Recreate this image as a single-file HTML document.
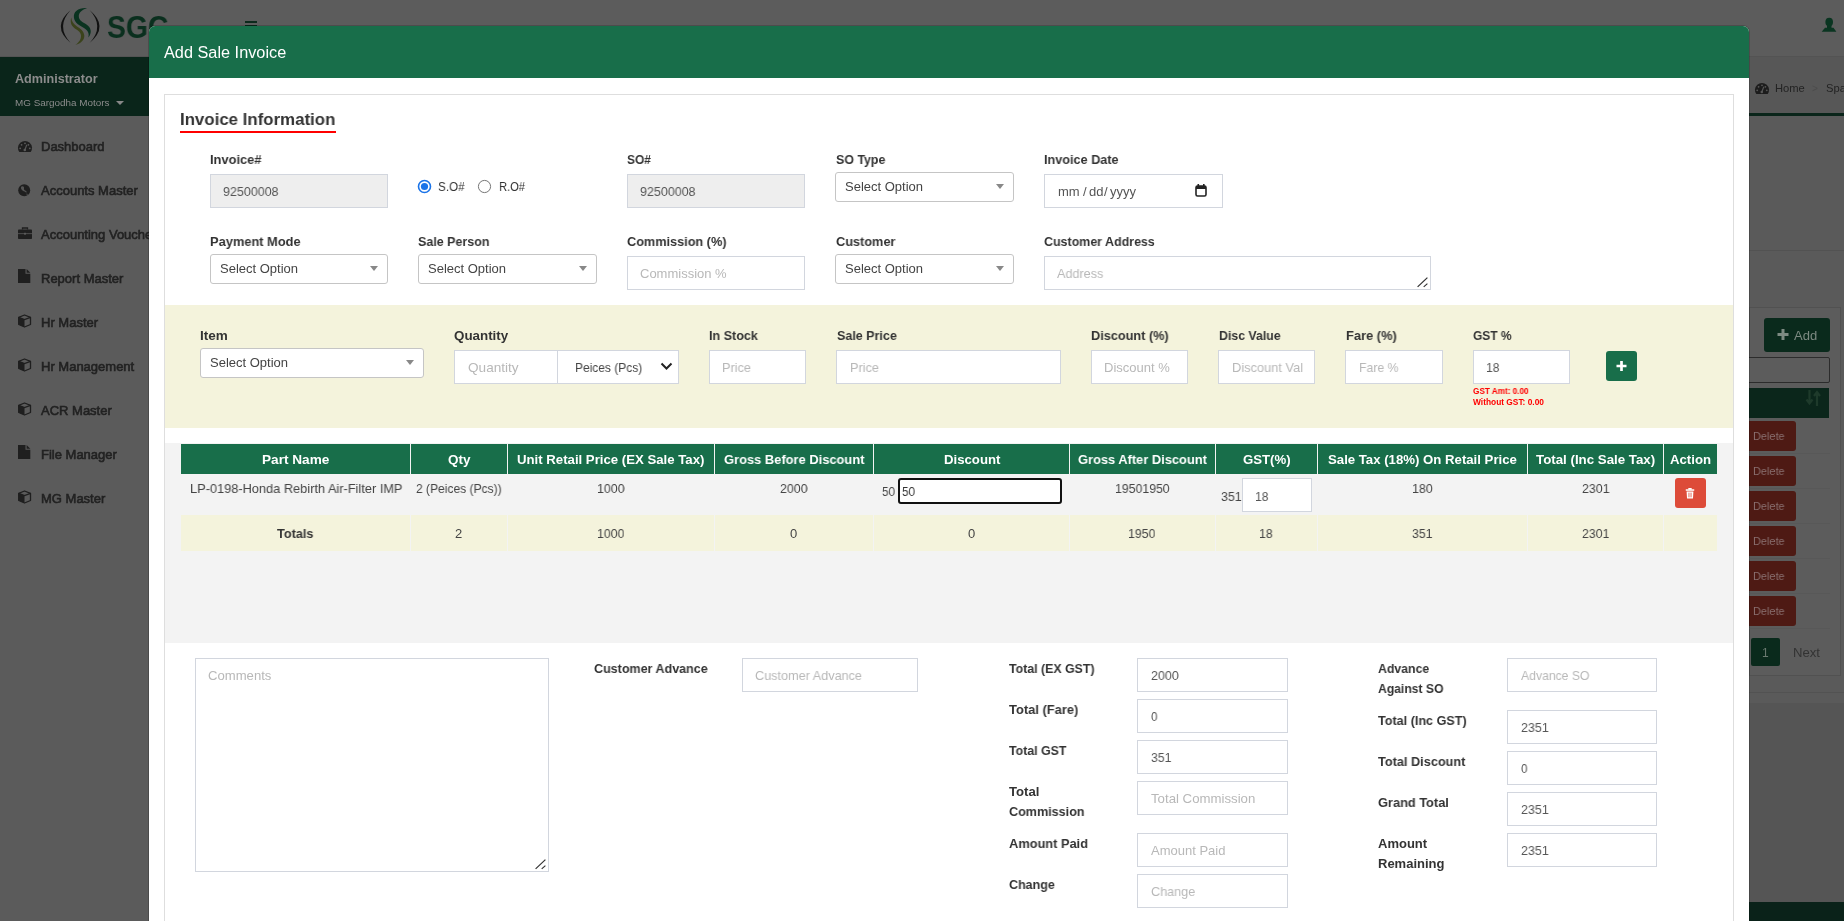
<!DOCTYPE html>
<html><head><meta charset="utf-8">
<style>
*{box-sizing:border-box}
html,body{margin:0;padding:0;width:1844px;height:921px;overflow:hidden;background:#5a5a5a;font-family:"Liberation Sans",sans-serif;color:#333}
.a{position:absolute}
.t{position:absolute;white-space:nowrap;will-change:transform}
svg{position:absolute;overflow:visible}
</style></head><body>

<div class="a" style="left:0px;top:0px;width:1844px;height:56px;background:#5c5c5c;"></div>
<div class="a" style="left:0px;top:56px;width:1844px;height:1px;background:#535353;"></div>
<div class="a" style="left:0px;top:57px;width:230px;height:864px;background:#5b5b5b;"></div>
<div class="a" style="left:0px;top:57px;width:230px;height:59px;background:#0a251a;"></div>
<div class="a" style="left:230px;top:57px;width:1614px;height:56px;background:#575757;"></div>
<div class="a" style="left:230px;top:113px;width:1614px;height:3px;background:#0a251a;"></div>
<div class="a" style="left:230px;top:116px;width:1614px;height:786px;background:#5a5a5a;"></div>
<div class="a" style="left:230px;top:902px;width:1614px;height:19px;background:#0a2219;"></div>
<svg style="left:0px;top:0px" width="180" height="56" viewBox="0 0 180 56">
<path d="M70.5 10.3 Q51 26.5 70.5 42.7 Q55.5 26.5 70.5 10.3 Z" fill="#111"/>
<path d="M89.8 10.3 Q109.3 26.5 89.8 42.7 Q104.8 26.5 89.8 10.3 Z" fill="#111"/>
<path d="M87 8.2 C79 7.5 73 11.5 74 18 C74.8 23 79.5 25.5 84 28 C88 30.5 89.5 33.5 88.3 37.5 C92.5 32.5 91 27.5 86.5 24.5 C82.5 22 79 20.5 78.8 16.5 C78.6 12.5 82 9.5 87 8.2 Z" fill="#0a3320"/>
<path d="M71.3 17.5 C69.5 23 72 27 76.5 29.5 C80.5 32 82 35 80.5 39 C79.5 41.5 77.5 43.5 75.5 44.7 C81 43.5 84.5 40 84.3 35.5 C84 31 80 28.5 77 26.5 C73.5 24 71.5 21.5 71.3 17.5 Z" fill="#3b431b"/>
</svg>
<div class="t" style="left:106.80px;top:6.79px;font-size:31.5px;line-height:41px;font-weight:700;color:#0a2f1e;transform:scaleX(0.8995);transform-origin:0 0;">SGC</div>
<div class="a" style="left:245px;top:21px;width:12px;height:2px;background:#0c2a1c;"></div>
<div class="a" style="left:245px;top:25px;width:12px;height:2px;background:#0c2a1c;"></div>
<svg style="left:1821px;top:17px" width="16" height="15" viewBox="0 0 16 15"><ellipse cx="8.2" cy="5" rx="3.8" ry="4.3" fill="#0a3521"/><rect x="6" y="8" width="4.5" height="3.5" fill="#0a3521"/><path d="M0.7 14.8 L4 10.8 H12.5 L15.4 14.8 Z" fill="#0a3521"/></svg>
<div class="t" style="left:15.00px;top:70.84px;font-size:12.6px;line-height:16px;font-weight:700;color:#8c8c8c;">Administrator</div>
<div class="t" style="left:15.40px;top:96.23px;font-size:9.9px;line-height:13px;font-weight:400;color:#8c8c8c;">MG Sargodha Motors</div>
<div class="a" style="left:116px;top:101px;width:0;height:0;border-left:4px solid transparent;border-right:4px solid transparent;border-top:4px solid #888"></div>
<div class="t" style="left:41.00px;top:138.20px;font-size:13px;line-height:17px;font-weight:400;color:#222;-webkit-text-stroke:0.6px #222;">Dashboard</div>
<svg style="left:18px;top:141px" width="14" height="11" viewBox="0 0 14 11"><path d="M1.3 11 A7 7 0 1 1 12.7 11 Z" fill="#1f1f1f"/><circle cx="7" cy="2.3" r="0.9" fill="#5b5b5b"/><circle cx="3.6" cy="3.8" r="0.9" fill="#5b5b5b"/><circle cx="10.4" cy="3.8" r="0.9" fill="#5b5b5b"/><circle cx="2.2" cy="7.3" r="0.9" fill="#5b5b5b"/><circle cx="11.8" cy="7.3" r="0.9" fill="#5b5b5b"/><path d="M6.8 9 L8.8 3.8" stroke="#5b5b5b" stroke-width="1.1"/><circle cx="6.8" cy="9" r="1.3" fill="#5b5b5b"/></svg>
<div class="t" style="left:41.00px;top:182.20px;font-size:13px;line-height:17px;font-weight:400;color:#222;-webkit-text-stroke:0.6px #222;">Accounts Master</div>
<svg style="left:18px;top:184px" width="13" height="13" viewBox="0 0 13 13"><circle cx="6.2" cy="6.3" r="6" fill="#1f1f1f"/><path d="M3.5 2.5 C5 2 6.5 3 6 4.5 C5.5 6 7.5 6.5 8.5 7.5 C9 8.5 8 9 7.5 8 C6.5 7 5 7.5 4 6 C3 5 2.5 3.5 3.5 2.5 Z" fill="#5b5b5b" opacity="0.9"/><path d="M8 10 C9 9.5 10 10 9.5 11 Z" fill="#5b5b5b"/></svg>
<div class="t" style="left:41.00px;top:226.20px;font-size:13px;line-height:17px;font-weight:400;color:#222;-webkit-text-stroke:0.6px #222;">Accounting Vouchers</div>
<svg style="left:18px;top:227px" width="14" height="12" viewBox="0 0 14 12"><path d="M4.5 2.5 V1 H9.5 V2.5" fill="none" stroke="#1f1f1f" stroke-width="1.3"/><rect x="0" y="2.5" width="14" height="9.5" rx="0.8" fill="#1f1f1f"/><rect x="0" y="6.3" width="14" height="0.8" fill="#5b5b5b"/><rect x="6" y="5.8" width="2" height="1.8" fill="#5b5b5b"/></svg>
<div class="t" style="left:41.00px;top:270.20px;font-size:13px;line-height:17px;font-weight:400;color:#222;-webkit-text-stroke:0.6px #222;">Report Master</div>
<svg style="left:18px;top:269px" width="13" height="14" viewBox="0 0 13 14"><path d="M0 0 H7.5 V4.8 H12.3 V14 H0 Z" fill="#1f1f1f"/><path d="M8.6 0 L12.3 3.7 H8.6 Z" fill="#1f1f1f"/></svg>
<div class="t" style="left:41.00px;top:314.20px;font-size:13px;line-height:17px;font-weight:400;color:#222;-webkit-text-stroke:0.6px #222;">Hr Master</div>
<svg style="left:18px;top:314px" width="14" height="14" viewBox="0 0 14 14"><path d="M6.5 1 L12.5 3.3 V10.5 L6.5 13 L0.7 10.5 V3.3 Z" fill="none" stroke="#1f1f1f" stroke-width="1.3" stroke-linejoin="round"/><path d="M0.7 3.3 L6.5 5.6 L12.5 3.3" fill="none" stroke="#1f1f1f" stroke-width="1.3"/><path d="M0.7 3.3 L6.5 5.6 V13 L0.7 10.5 Z" fill="#1f1f1f"/></svg>
<div class="t" style="left:41.00px;top:358.20px;font-size:13px;line-height:17px;font-weight:400;color:#222;-webkit-text-stroke:0.6px #222;">Hr Management</div>
<svg style="left:18px;top:358px" width="14" height="14" viewBox="0 0 14 14"><path d="M6.5 1 L12.5 3.3 V10.5 L6.5 13 L0.7 10.5 V3.3 Z" fill="none" stroke="#1f1f1f" stroke-width="1.3" stroke-linejoin="round"/><path d="M0.7 3.3 L6.5 5.6 L12.5 3.3" fill="none" stroke="#1f1f1f" stroke-width="1.3"/><path d="M0.7 3.3 L6.5 5.6 V13 L0.7 10.5 Z" fill="#1f1f1f"/></svg>
<div class="t" style="left:41.00px;top:402.20px;font-size:13px;line-height:17px;font-weight:400;color:#222;-webkit-text-stroke:0.6px #222;">ACR Master</div>
<svg style="left:18px;top:402px" width="14" height="14" viewBox="0 0 14 14"><path d="M6.5 1 L12.5 3.3 V10.5 L6.5 13 L0.7 10.5 V3.3 Z" fill="none" stroke="#1f1f1f" stroke-width="1.3" stroke-linejoin="round"/><path d="M0.7 3.3 L6.5 5.6 L12.5 3.3" fill="none" stroke="#1f1f1f" stroke-width="1.3"/><path d="M0.7 3.3 L6.5 5.6 V13 L0.7 10.5 Z" fill="#1f1f1f"/></svg>
<div class="t" style="left:41.00px;top:446.20px;font-size:13px;line-height:17px;font-weight:400;color:#222;-webkit-text-stroke:0.6px #222;">File Manager</div>
<svg style="left:18px;top:445px" width="13" height="14" viewBox="0 0 13 14"><path d="M0 0 H7.5 V4.8 H12.3 V14 H0 Z" fill="#1f1f1f"/><path d="M8.6 0 L12.3 3.7 H8.6 Z" fill="#1f1f1f"/></svg>
<div class="t" style="left:41.00px;top:490.20px;font-size:13px;line-height:17px;font-weight:400;color:#222;-webkit-text-stroke:0.6px #222;">MG Master</div>
<svg style="left:18px;top:490px" width="14" height="14" viewBox="0 0 14 14"><path d="M6.5 1 L12.5 3.3 V10.5 L6.5 13 L0.7 10.5 V3.3 Z" fill="none" stroke="#1f1f1f" stroke-width="1.3" stroke-linejoin="round"/><path d="M0.7 3.3 L6.5 5.6 L12.5 3.3" fill="none" stroke="#1f1f1f" stroke-width="1.3"/><path d="M0.7 3.3 L6.5 5.6 V13 L0.7 10.5 Z" fill="#1f1f1f"/></svg>
<svg style="left:1754.5px;top:82.5px" width="14" height="11" viewBox="0 0 14 11"><path d="M1.3 11 A7 7 0 1 1 12.7 11 Z" fill="#1c1c1c"/><circle cx="7" cy="2.3" r="0.9" fill="#575757"/><circle cx="3.6" cy="3.8" r="0.9" fill="#575757"/><circle cx="10.4" cy="3.8" r="0.9" fill="#575757"/><circle cx="2.2" cy="7.3" r="0.9" fill="#575757"/><circle cx="11.8" cy="7.3" r="0.9" fill="#575757"/><path d="M6.8 9 L8.8 3.8" stroke="#575757" stroke-width="1.1"/><circle cx="6.8" cy="9" r="1.3" fill="#575757"/></svg>
<div class="t" style="left:1774.80px;top:80.80px;font-size:11.2px;line-height:15px;font-weight:400;color:#232323;transform:scaleX(0.9840);transform-origin:0 0;">Home</div>
<div class="t" style="left:1811.90px;top:82.19px;font-size:10px;line-height:13px;font-weight:400;color:#4c4c4c;transform:scaleX(0.9761);transform-origin:0 0;">&gt;</div>
<div class="t" style="left:1825.80px;top:80.80px;font-size:11.2px;line-height:15px;font-weight:400;color:#232323;">Spa</div>
<div class="a" style="left:230px;top:250px;width:1614px;height:1px;background:#525252;"></div>
<div class="a" style="left:1749px;top:307px;width:92px;height:369px;background:#5c5c5c;border:1px solid #515151;"></div>
<div class="a" style="left:1764px;top:318px;width:66px;height:34px;background:#0a2a1c;border-radius:3px;"></div>
<svg style="left:1777px;top:329px" width="12" height="11" viewBox="0 0 12 11"><path d="M6 0 V11 M0.5 5.5 H11.5" stroke="#7d8a82" stroke-width="3"/></svg>
<div class="t" style="left:1794.00px;top:327.20px;font-size:13px;line-height:17px;font-weight:400;color:#7d8a82;transform:scaleX(0.9813);transform-origin:0 0;">Add</div>
<div class="a" style="left:1700px;top:357px;width:130px;height:26px;background:#5c5c5c;border:1px solid #2c2c2c;border-radius:2px;"></div>
<div class="a" style="left:1700px;top:388px;width:129px;height:30px;background:#0b261b;"></div>
<svg style="left:1806px;top:390px" width="15" height="16" viewBox="0 0 15 16"><path d="M3.5 0 V12 M0.5 9.5 L3.5 13.5 L6.5 9.5" stroke="#1e3a2b" stroke-width="2.2" fill="none"/><path d="M11 16 V3 M8 6 L11 2 L14 6" stroke="#1e3a2b" stroke-width="2.2" fill="none"/></svg>
<div class="a" style="left:1700px;top:421px;width:96px;height:30px;background:#4e1a14;border-radius:3px;"></div>
<div class="t" style="left:1753.40px;top:428.70px;font-size:11.5px;line-height:15px;font-weight:400;color:#8a7070;transform:scaleX(0.9506);transform-origin:0 0;">Delete</div>
<div class="a" style="left:1749px;top:453px;width:81px;height:1px;background:#585858;"></div>
<div class="a" style="left:1700px;top:456px;width:96px;height:30px;background:#4e1a14;border-radius:3px;"></div>
<div class="t" style="left:1753.40px;top:463.70px;font-size:11.5px;line-height:15px;font-weight:400;color:#8a7070;transform:scaleX(0.9506);transform-origin:0 0;">Delete</div>
<div class="a" style="left:1749px;top:488px;width:81px;height:1px;background:#585858;"></div>
<div class="a" style="left:1700px;top:491px;width:96px;height:30px;background:#4e1a14;border-radius:3px;"></div>
<div class="t" style="left:1753.40px;top:498.70px;font-size:11.5px;line-height:15px;font-weight:400;color:#8a7070;transform:scaleX(0.9506);transform-origin:0 0;">Delete</div>
<div class="a" style="left:1749px;top:523px;width:81px;height:1px;background:#585858;"></div>
<div class="a" style="left:1700px;top:526px;width:96px;height:30px;background:#4e1a14;border-radius:3px;"></div>
<div class="t" style="left:1753.40px;top:533.70px;font-size:11.5px;line-height:15px;font-weight:400;color:#8a7070;transform:scaleX(0.9506);transform-origin:0 0;">Delete</div>
<div class="a" style="left:1749px;top:558px;width:81px;height:1px;background:#585858;"></div>
<div class="a" style="left:1700px;top:561px;width:96px;height:30px;background:#4e1a14;border-radius:3px;"></div>
<div class="t" style="left:1753.40px;top:568.70px;font-size:11.5px;line-height:15px;font-weight:400;color:#8a7070;transform:scaleX(0.9506);transform-origin:0 0;">Delete</div>
<div class="a" style="left:1749px;top:593px;width:81px;height:1px;background:#585858;"></div>
<div class="a" style="left:1700px;top:596px;width:96px;height:30px;background:#4e1a14;border-radius:3px;"></div>
<div class="t" style="left:1753.40px;top:603.70px;font-size:11.5px;line-height:15px;font-weight:400;color:#8a7070;transform:scaleX(0.9506);transform-origin:0 0;">Delete</div>
<div class="a" style="left:1749px;top:628px;width:81px;height:1px;background:#585858;"></div>
<div class="a" style="left:1751px;top:638px;width:29px;height:28px;background:#0a2a1c;border-radius:2px;"></div>
<div class="t" style="left:1762.00px;top:645.03px;font-size:12px;line-height:16px;font-weight:400;color:#6a7a70;">1</div>
<div class="t" style="left:1793.00px;top:644.20px;font-size:13px;line-height:17px;font-weight:400;color:#333;transform:scaleX(1.0101);transform-origin:0 0;">Next</div>
<div class="a" style="left:1749px;top:692px;width:95px;height:1px;background:#525252;"></div>
<div class="a" style="left:1749px;top:703px;width:95px;height:199px;background:#555555;"></div>
<div class="a" style="left:148px;top:25px;width:1602px;height:935px;background:rgba(0,0,0,0.17);border-radius:7px 7px 0 0;"></div>
<div class="a" style="left:149px;top:26px;width:1600px;height:934px;background:#fff;border-radius:6px 6px 0 0;"></div>
<div class="a" style="left:149px;top:26px;width:1600px;height:52px;background:#186e4a;border-radius:6px 6px 0 0;"></div>
<div class="t" style="left:163.60px;top:42.11px;font-size:16.3px;line-height:21px;font-weight:400;color:#fff;">Add Sale Invoice</div>
<div class="a" style="left:164px;top:94px;width:1570px;height:866px;background:#fff;border:1px solid #dedede;"></div>
<div class="t" style="left:179.90px;top:109.38px;font-size:17px;line-height:22px;font-weight:700;color:#333;transform:scaleX(0.9905);transform-origin:0 0;">Invoice Information</div>
<div class="a" style="left:180px;top:131px;width:156px;height:2px;background:#ff0000;"></div>
<div class="t" style="left:209.70px;top:150.60px;font-size:13px;line-height:17px;font-weight:700;color:#333;transform:scaleX(0.9899);transform-origin:0 0;">Invoice#</div>
<div class="a" style="left:210px;top:174px;width:178px;height:34px;background:#eeeeee;border:1px solid #d2d6de;"></div>
<div class="t" style="left:222.50px;top:183.20px;font-size:13px;line-height:17px;font-weight:400;color:#555;transform:scaleX(0.9595);transform-origin:0 0;">92500008</div>
<svg style="left:417px;top:179px" width="15" height="15" viewBox="0 0 15 15"><circle cx="7.5" cy="7.5" r="6" fill="#fff" stroke="#1a73e8" stroke-width="1.6"/><circle cx="7.5" cy="7.5" r="3.6" fill="#1a73e8"/></svg>
<div class="t" style="left:438.40px;top:177.90px;font-size:13px;line-height:17px;font-weight:400;color:#333;transform:scaleX(0.8979);transform-origin:0 0;">S.O#</div>
<svg style="left:477px;top:179px" width="15" height="15" viewBox="0 0 15 15"><circle cx="7.5" cy="7.5" r="6.1" fill="#fff" stroke="#767676" stroke-width="1"/></svg>
<div class="t" style="left:499.00px;top:177.90px;font-size:13px;line-height:17px;font-weight:400;color:#333;transform:scaleX(0.8569);transform-origin:0 0;">R.O#</div>
<div class="t" style="left:627.00px;top:150.60px;font-size:13px;line-height:17px;font-weight:700;color:#333;transform:scaleX(0.9188);transform-origin:0 0;">SO#</div>
<div class="a" style="left:627px;top:174px;width:178px;height:34px;background:#eeeeee;border:1px solid #d2d6de;"></div>
<div class="t" style="left:639.50px;top:183.20px;font-size:13px;line-height:17px;font-weight:400;color:#555;transform:scaleX(0.9595);transform-origin:0 0;">92500008</div>
<div class="t" style="left:835.70px;top:150.60px;font-size:13px;line-height:17px;font-weight:700;color:#333;transform:scaleX(0.9542);transform-origin:0 0;">SO Type</div>
<div class="a" style="left:835px;top:172px;width:179px;height:30px;background:#fff;border:1px solid #c5c5c5;border-radius:3px;"></div>
<div class="t" style="left:844.50px;top:178.20px;font-size:13px;line-height:17px;font-weight:400;color:#444;">Select Option</div>
<div class="a" style="left:995.5px;top:184px;width:0;height:0;border-left:4px solid transparent;border-right:4px solid transparent;border-top:5px solid #888"></div>
<div class="t" style="left:1044.00px;top:150.60px;font-size:13px;line-height:17px;font-weight:700;color:#333;transform:scaleX(0.9741);transform-origin:0 0;">Invoice Date</div>
<div class="a" style="left:1044px;top:174px;width:179px;height:34px;background:#fff;border:1px solid #d2d6de;"></div>
<div class="t" style="left:1058.30px;top:183.20px;font-size:13px;line-height:17px;font-weight:400;color:#555;">mm</div>
<div class="t" style="left:1082.50px;top:183.20px;font-size:13px;line-height:17px;font-weight:400;color:#555;">/</div>
<div class="t" style="left:1088.60px;top:183.20px;font-size:13px;line-height:17px;font-weight:400;color:#555;">dd</div>
<div class="t" style="left:1104.30px;top:183.20px;font-size:13px;line-height:17px;font-weight:400;color:#555;">/</div>
<div class="t" style="left:1110.40px;top:183.20px;font-size:13px;line-height:17px;font-weight:400;color:#555;">yyyy</div>
<svg style="left:1195px;top:184px" width="12" height="13" viewBox="0 0 12 13"><rect x="1" y="2" width="10" height="10" rx="1.5" fill="none" stroke="#222" stroke-width="1.6"/><rect x="1" y="2" width="10" height="3" fill="#222"/><rect x="2.5" y="0" width="1.6" height="3" fill="#222"/><rect x="8" y="0" width="1.6" height="3" fill="#222"/></svg>
<div class="t" style="left:210.00px;top:232.80px;font-size:13px;line-height:17px;font-weight:700;color:#333;transform:scaleX(0.9875);transform-origin:0 0;">Payment Mode</div>
<div class="a" style="left:210px;top:254px;width:178px;height:30px;background:#fff;border:1px solid #c5c5c5;border-radius:3px;"></div>
<div class="t" style="left:219.50px;top:260.20px;font-size:13px;line-height:17px;font-weight:400;color:#444;">Select Option</div>
<div class="a" style="left:369.5px;top:266px;width:0;height:0;border-left:4px solid transparent;border-right:4px solid transparent;border-top:5px solid #888"></div>
<div class="t" style="left:418.00px;top:232.80px;font-size:13px;line-height:17px;font-weight:700;color:#333;transform:scaleX(0.9607);transform-origin:0 0;">Sale Person</div>
<div class="a" style="left:418px;top:254px;width:179px;height:30px;background:#fff;border:1px solid #c5c5c5;border-radius:3px;"></div>
<div class="t" style="left:427.50px;top:260.20px;font-size:13px;line-height:17px;font-weight:400;color:#444;">Select Option</div>
<div class="a" style="left:578.5px;top:266px;width:0;height:0;border-left:4px solid transparent;border-right:4px solid transparent;border-top:5px solid #888"></div>
<div class="t" style="left:627.00px;top:232.80px;font-size:13px;line-height:17px;font-weight:700;color:#333;transform:scaleX(0.9770);transform-origin:0 0;">Commission (%)</div>
<div class="a" style="left:627px;top:256px;width:178px;height:34px;background:#fff;border:1px solid #d2d6de;"></div>
<div class="t" style="left:640.00px;top:265.20px;font-size:13px;line-height:17px;font-weight:400;color:#b8b8b8;">Commission %</div>
<div class="t" style="left:836.00px;top:232.80px;font-size:13px;line-height:17px;font-weight:700;color:#333;transform:scaleX(0.9789);transform-origin:0 0;">Customer</div>
<div class="a" style="left:835px;top:254px;width:179px;height:30px;background:#fff;border:1px solid #c5c5c5;border-radius:3px;"></div>
<div class="t" style="left:844.50px;top:260.20px;font-size:13px;line-height:17px;font-weight:400;color:#444;">Select Option</div>
<div class="a" style="left:995.5px;top:266px;width:0;height:0;border-left:4px solid transparent;border-right:4px solid transparent;border-top:5px solid #888"></div>
<div class="t" style="left:1044.00px;top:232.80px;font-size:13px;line-height:17px;font-weight:700;color:#333;transform:scaleX(0.9566);transform-origin:0 0;">Customer Address</div>
<div class="a" style="left:1044px;top:256px;width:387px;height:34px;background:#fff;border:1px solid #d2d6de;"></div>
<div class="t" style="left:1057.00px;top:265.20px;font-size:13px;line-height:17px;font-weight:400;color:#b8b8b8;transform:scaleX(0.9687);transform-origin:0 0;">Address</div>
<svg style="left:1416px;top:275px" width="15" height="15" viewBox="0 0 15 15"><path d="M1.6 11.9 L11.4 2.6 M7.7 11.9 L11.4 8.6" stroke="#333" stroke-width="1.2"/></svg>
<div class="a" style="left:165px;top:305px;width:1568px;height:123px;background:#f4f3dc;"></div>
<div class="t" style="left:200.00px;top:326.70px;font-size:13px;line-height:17px;font-weight:700;color:#333;transform:scaleX(1.0400);transform-origin:0 0;">Item</div>
<div class="a" style="left:200px;top:348px;width:224px;height:30px;background:#fff;border:1px solid #c5c5c5;border-radius:3px;"></div>
<div class="t" style="left:209.50px;top:354.20px;font-size:13px;line-height:17px;font-weight:400;color:#444;">Select Option</div>
<div class="a" style="left:405.5px;top:360px;width:0;height:0;border-left:4px solid transparent;border-right:4px solid transparent;border-top:5px solid #888"></div>
<div class="t" style="left:454.00px;top:326.70px;font-size:13px;line-height:17px;font-weight:700;color:#333;transform:scaleX(1.0280);transform-origin:0 0;">Quantity</div>
<div class="a" style="left:454px;top:350px;width:104px;height:34px;background:#fff;border:1px solid #d2d6de;"></div>
<div class="t" style="left:467.50px;top:358.60px;font-size:13px;line-height:17px;font-weight:400;color:#b8b8b8;transform:scaleX(1.0452);transform-origin:0 0;">Quantity</div>
<div class="a" style="left:557px;top:350px;width:122px;height:34px;background:#fff;border:1px solid #d2d6de;"></div>
<div class="t" style="left:575.20px;top:358.60px;font-size:13px;line-height:17px;font-weight:400;color:#444;transform:scaleX(0.9197);transform-origin:0 0;">Peices (Pcs)</div>
<svg style="left:660px;top:362px" width="13" height="9" viewBox="0 0 13 9"><path d="M1.5 1.5 L6.5 6.5 L11.5 1.5" fill="none" stroke="#222" stroke-width="2"/></svg>
<div class="t" style="left:709.00px;top:326.70px;font-size:13px;line-height:17px;font-weight:700;color:#333;transform:scaleX(0.9670);transform-origin:0 0;">In Stock</div>
<div class="a" style="left:709px;top:350px;width:97px;height:34px;background:#fff;border:1px solid #d2d6de;"></div>
<div class="t" style="left:722.20px;top:358.60px;font-size:13px;line-height:17px;font-weight:400;color:#b8b8b8;transform:scaleX(0.9723);transform-origin:0 0;">Price</div>
<div class="t" style="left:836.50px;top:326.70px;font-size:13px;line-height:17px;font-weight:700;color:#333;transform:scaleX(0.9621);transform-origin:0 0;">Sale Price</div>
<div class="a" style="left:836px;top:350px;width:225px;height:34px;background:#fff;border:1px solid #d2d6de;"></div>
<div class="t" style="left:849.50px;top:358.60px;font-size:13px;line-height:17px;font-weight:400;color:#b8b8b8;transform:scaleX(0.9723);transform-origin:0 0;">Price</div>
<div class="t" style="left:1091.00px;top:326.70px;font-size:13px;line-height:17px;font-weight:700;color:#333;transform:scaleX(0.9781);transform-origin:0 0;">Discount (%)</div>
<div class="a" style="left:1091px;top:350px;width:97px;height:34px;background:#fff;border:1px solid #d2d6de;"></div>
<div class="t" style="left:1104.00px;top:358.60px;font-size:13px;line-height:17px;font-weight:400;color:#b8b8b8;">Discount %</div>
<div class="t" style="left:1218.50px;top:326.70px;font-size:13px;line-height:17px;font-weight:700;color:#333;transform:scaleX(0.9487);transform-origin:0 0;">Disc Value</div>
<div class="a" style="left:1218px;top:350px;width:97px;height:34px;background:#fff;border:1px solid #d2d6de;"></div>
<div class="t" style="left:1231.50px;top:358.60px;font-size:13px;line-height:17px;font-weight:400;color:#b8b8b8;transform:scaleX(0.9859);transform-origin:0 0;">Discount Val</div>
<div class="t" style="left:1345.50px;top:326.70px;font-size:13px;line-height:17px;font-weight:700;color:#333;transform:scaleX(0.9885);transform-origin:0 0;">Fare (%)</div>
<div class="a" style="left:1345px;top:350px;width:98px;height:34px;background:#fff;border:1px solid #d2d6de;"></div>
<div class="t" style="left:1358.50px;top:358.60px;font-size:13px;line-height:17px;font-weight:400;color:#b8b8b8;transform:scaleX(0.9427);transform-origin:0 0;">Fare %</div>
<div class="t" style="left:1473.00px;top:326.70px;font-size:13px;line-height:17px;font-weight:700;color:#333;transform:scaleX(0.9214);transform-origin:0 0;">GST %</div>
<div class="a" style="left:1473px;top:350px;width:97px;height:34px;background:#fff;border:1px solid #d2d6de;"></div>
<div class="t" style="left:1486.00px;top:358.60px;font-size:13px;line-height:17px;font-weight:400;color:#555;transform:scaleX(0.9336);transform-origin:0 0;">18</div>
<div class="t" style="left:1473.00px;top:385.96px;font-size:8.3px;line-height:11px;font-weight:700;color:#ff0000;transform:scaleX(0.9854);transform-origin:0 0;">GST Amt: 0.00</div>
<div class="t" style="left:1473.00px;top:396.56px;font-size:8.3px;line-height:11px;font-weight:700;color:#ff0000;transform:scaleX(1.0074);transform-origin:0 0;">Without GST: 0.00</div>
<div class="a" style="left:1606px;top:351px;width:31px;height:30px;background:#186e4a;border-radius:3px;"></div>
<svg style="left:1616px;top:360.5px" width="11" height="10" viewBox="0 0 11 10"><path d="M5.5 0 V10 M0.5 5 H10.5" stroke="#fff" stroke-width="2.7"/></svg>
<div class="a" style="left:165px;top:443px;width:1568px;height:200px;background:#f3f3f3;"></div>
<div class="a" style="left:181px;top:444px;width:1536px;height:30px;background:#186e4a;"></div>
<div class="a" style="left:181px;top:515px;width:1536px;height:36px;background:#f4f3dc;"></div>
<div class="a" style="left:410px;top:444px;width:1px;height:30px;background:#f3f3f3;"></div>
<div class="a" style="left:410px;top:515px;width:1px;height:36px;background:#f3f3f3;"></div>
<div class="a" style="left:507px;top:444px;width:1px;height:30px;background:#f3f3f3;"></div>
<div class="a" style="left:507px;top:515px;width:1px;height:36px;background:#f3f3f3;"></div>
<div class="a" style="left:714px;top:444px;width:1px;height:30px;background:#f3f3f3;"></div>
<div class="a" style="left:714px;top:515px;width:1px;height:36px;background:#f3f3f3;"></div>
<div class="a" style="left:873px;top:444px;width:1px;height:30px;background:#f3f3f3;"></div>
<div class="a" style="left:873px;top:515px;width:1px;height:36px;background:#f3f3f3;"></div>
<div class="a" style="left:1069px;top:444px;width:1px;height:30px;background:#f3f3f3;"></div>
<div class="a" style="left:1069px;top:515px;width:1px;height:36px;background:#f3f3f3;"></div>
<div class="a" style="left:1215px;top:444px;width:1px;height:30px;background:#f3f3f3;"></div>
<div class="a" style="left:1215px;top:515px;width:1px;height:36px;background:#f3f3f3;"></div>
<div class="a" style="left:1317px;top:444px;width:1px;height:30px;background:#f3f3f3;"></div>
<div class="a" style="left:1317px;top:515px;width:1px;height:36px;background:#f3f3f3;"></div>
<div class="a" style="left:1527px;top:444px;width:1px;height:30px;background:#f3f3f3;"></div>
<div class="a" style="left:1527px;top:515px;width:1px;height:36px;background:#f3f3f3;"></div>
<div class="a" style="left:1663px;top:444px;width:1px;height:30px;background:#f3f3f3;"></div>
<div class="a" style="left:1663px;top:515px;width:1px;height:36px;background:#f3f3f3;"></div>
<div class="t" style="left:261.70px;top:451.44px;font-size:13.2px;line-height:17px;font-weight:700;color:#fff;transform:scaleX(1.0322);transform-origin:0 0;">Part Name</div>
<div class="t" style="left:447.55px;top:451.44px;font-size:13.2px;line-height:17px;font-weight:700;color:#fff;transform:scaleX(1.0225);transform-origin:0 0;">Qty</div>
<div class="t" style="left:517.40px;top:451.44px;font-size:13.2px;line-height:17px;font-weight:700;color:#fff;">Unit Retail Price (EX Sale Tax)</div>
<div class="t" style="left:723.70px;top:451.44px;font-size:13.2px;line-height:17px;font-weight:700;color:#fff;transform:scaleX(0.9780);transform-origin:0 0;">Gross Before Discount</div>
<div class="t" style="left:943.50px;top:451.44px;font-size:13.2px;line-height:17px;font-weight:700;color:#fff;">Discount</div>
<div class="t" style="left:1078.00px;top:451.44px;font-size:13.2px;line-height:17px;font-weight:700;color:#fff;transform:scaleX(0.9753);transform-origin:0 0;">Gross After Discount</div>
<div class="t" style="left:1242.50px;top:451.44px;font-size:13.2px;line-height:17px;font-weight:700;color:#fff;">GST(%)</div>
<div class="t" style="left:1327.50px;top:451.44px;font-size:13.2px;line-height:17px;font-weight:700;color:#fff;">Sale Tax (18%) On Retail Price</div>
<div class="t" style="left:1536.20px;top:451.44px;font-size:13.2px;line-height:17px;font-weight:700;color:#fff;transform:scaleX(1.0081);transform-origin:0 0;">Total (Inc Sale Tax)</div>
<div class="t" style="left:1669.80px;top:451.44px;font-size:13.2px;line-height:17px;font-weight:700;color:#fff;">Action</div>
<div class="t" style="left:189.50px;top:480.40px;font-size:13px;line-height:17px;font-weight:400;color:#444;transform:scaleX(0.9836);transform-origin:0 0;">LP-0198-Honda Rebirth Air-Filter IMP</div>
<div class="t" style="left:416.00px;top:480.40px;font-size:13px;line-height:17px;font-weight:400;color:#444;transform:scaleX(0.9258);transform-origin:0 0;">2 (Peices (Pcs))</div>
<div class="t" style="left:596.75px;top:480.40px;font-size:13px;line-height:17px;font-weight:400;color:#444;transform:scaleX(0.9509);transform-origin:0 0;">1000</div>
<div class="t" style="left:779.75px;top:480.40px;font-size:13px;line-height:17px;font-weight:400;color:#444;transform:scaleX(0.9509);transform-origin:0 0;">2000</div>
<div class="t" style="left:881.60px;top:483.40px;font-size:13px;line-height:17px;font-weight:400;color:#444;transform:scaleX(0.8990);transform-origin:0 0;">50</div>
<div class="a" style="left:898px;top:478px;width:164px;height:26px;background:#fff;border:2px solid #111;border-radius:3px;"></div>
<div class="t" style="left:902.00px;top:483.40px;font-size:13px;line-height:17px;font-weight:400;color:#333;transform:scaleX(0.8990);transform-origin:0 0;">50</div>
<div class="t" style="left:1115.40px;top:480.40px;font-size:13px;line-height:17px;font-weight:400;color:#444;transform:scaleX(0.9440);transform-origin:0 0;">19501950</div>
<div class="t" style="left:1220.60px;top:487.70px;font-size:13px;line-height:17px;font-weight:400;color:#444;transform:scaleX(0.9543);transform-origin:0 0;">351</div>
<div class="a" style="left:1242px;top:478px;width:70px;height:34px;background:#fff;border:1px solid #d2d6de;"></div>
<div class="t" style="left:1255.30px;top:487.70px;font-size:13px;line-height:17px;font-weight:400;color:#555;transform:scaleX(0.9336);transform-origin:0 0;">18</div>
<div class="t" style="left:1411.65px;top:480.40px;font-size:13px;line-height:17px;font-weight:400;color:#444;transform:scaleX(0.9543);transform-origin:0 0;">180</div>
<div class="t" style="left:1581.75px;top:480.40px;font-size:13px;line-height:17px;font-weight:400;color:#444;transform:scaleX(0.9509);transform-origin:0 0;">2301</div>
<div class="a" style="left:1675px;top:478px;width:31px;height:30px;background:#dd4b39;border-radius:3px;"></div>
<svg style="left:1685px;top:487.5px" width="10" height="11" viewBox="0 0 11 13"><rect x="0.5" y="1.5" width="10" height="1.8" fill="#fff"/><rect x="3.5" y="0" width="4" height="2" fill="#fff"/><path d="M1.5 4 H9.5 L9 12.5 H2 Z" fill="#fff"/><path d="M4 5.5 V11 M5.5 5.5 V11 M7 5.5 V11" stroke="#dd4b39" stroke-width="0.7"/></svg>
<div class="t" style="left:277.25px;top:524.90px;font-size:13px;line-height:17px;font-weight:700;color:#333;transform:scaleX(0.9781);transform-origin:0 0;">Totals</div>
<div class="t" style="left:455.08px;top:524.90px;font-size:13px;line-height:17px;font-weight:400;color:#444;transform:scaleX(0.9450);transform-origin:0 0;">2</div>
<div class="t" style="left:596.83px;top:524.90px;font-size:13px;line-height:17px;font-weight:400;color:#444;transform:scaleX(0.9450);transform-origin:0 0;">1000</div>
<div class="t" style="left:790.08px;top:524.90px;font-size:13px;line-height:17px;font-weight:400;color:#444;transform:scaleX(0.9450);transform-origin:0 0;">0</div>
<div class="t" style="left:967.58px;top:524.90px;font-size:13px;line-height:17px;font-weight:400;color:#444;transform:scaleX(0.9450);transform-origin:0 0;">0</div>
<div class="t" style="left:1128.33px;top:524.90px;font-size:13px;line-height:17px;font-weight:400;color:#444;transform:scaleX(0.9450);transform-origin:0 0;">1950</div>
<div class="t" style="left:1259.17px;top:524.90px;font-size:13px;line-height:17px;font-weight:400;color:#444;transform:scaleX(0.9450);transform-origin:0 0;">18</div>
<div class="t" style="left:1411.75px;top:524.90px;font-size:13px;line-height:17px;font-weight:400;color:#444;transform:scaleX(0.9450);transform-origin:0 0;">351</div>
<div class="t" style="left:1581.83px;top:524.90px;font-size:13px;line-height:17px;font-weight:400;color:#444;transform:scaleX(0.9450);transform-origin:0 0;">2301</div>
<div class="a" style="left:195px;top:658px;width:354px;height:214px;background:#fff;border:1px solid #d2d6de;"></div>
<svg style="left:534px;top:857px" width="15" height="15" viewBox="0 0 15 15"><path d="M1.6 11.9 L11.4 2.6 M7.7 11.9 L11.4 8.6" stroke="#333" stroke-width="1.2"/></svg>
<div class="t" style="left:207.70px;top:667.10px;font-size:13px;line-height:17px;font-weight:400;color:#b8b8b8;transform:scaleX(1.0088);transform-origin:0 0;">Comments</div>
<div class="t" style="left:594.20px;top:659.70px;font-size:13px;line-height:17px;font-weight:700;color:#333;transform:scaleX(0.9636);transform-origin:0 0;">Customer Advance</div>
<div class="a" style="left:742px;top:658px;width:176px;height:34px;background:#fff;border:1px solid #d2d6de;"></div>
<div class="t" style="left:755.20px;top:667.20px;font-size:13px;line-height:17px;font-weight:400;color:#b8b8b8;transform:scaleX(0.9742);transform-origin:0 0;">Customer Advance</div>
<div class="t" style="left:1008.50px;top:660.10px;font-size:13px;line-height:17px;font-weight:700;color:#333;transform:scaleX(0.9496);transform-origin:0 0;">Total (EX GST)</div>
<div class="a" style="left:1137px;top:658px;width:151px;height:34px;background:#fff;border:1px solid #d2d6de;"></div>
<div class="t" style="left:1150.50px;top:667.20px;font-size:13px;line-height:17px;font-weight:400;color:#555;transform:scaleX(0.9578);transform-origin:0 0;">2000</div>
<div class="t" style="left:1008.50px;top:701.10px;font-size:13px;line-height:17px;font-weight:700;color:#333;transform:scaleX(0.9926);transform-origin:0 0;">Total (Fare)</div>
<div class="a" style="left:1137px;top:699px;width:151px;height:34px;background:#fff;border:1px solid #d2d6de;"></div>
<div class="t" style="left:1150.50px;top:708.20px;font-size:13px;line-height:17px;font-weight:400;color:#555;transform:scaleX(0.8990);transform-origin:0 0;">0</div>
<div class="t" style="left:1008.50px;top:742.10px;font-size:13px;line-height:17px;font-weight:700;color:#333;transform:scaleX(0.9499);transform-origin:0 0;">Total GST</div>
<div class="a" style="left:1137px;top:740px;width:151px;height:34px;background:#fff;border:1px solid #d2d6de;"></div>
<div class="t" style="left:1150.50px;top:749.20px;font-size:13px;line-height:17px;font-weight:400;color:#555;transform:scaleX(0.9405);transform-origin:0 0;">351</div>
<div class="t" style="left:1008.50px;top:783.10px;font-size:13px;line-height:17px;font-weight:700;color:#333;transform:scaleX(1.0103);transform-origin:0 0;">Total</div>
<div class="t" style="left:1008.50px;top:803.10px;font-size:13px;line-height:17px;font-weight:700;color:#333;transform:scaleX(0.9678);transform-origin:0 0;">Commission</div>
<div class="a" style="left:1137px;top:781px;width:151px;height:34px;background:#fff;border:1px solid #d2d6de;"></div>
<div class="t" style="left:1150.50px;top:790.20px;font-size:13px;line-height:17px;font-weight:400;color:#b8b8b8;transform:scaleX(1.0167);transform-origin:0 0;">Total Commission</div>
<div class="t" style="left:1008.50px;top:835.10px;font-size:13px;line-height:17px;font-weight:700;color:#333;transform:scaleX(0.9855);transform-origin:0 0;">Amount Paid</div>
<div class="a" style="left:1137px;top:833px;width:151px;height:34px;background:#fff;border:1px solid #d2d6de;"></div>
<div class="t" style="left:1150.50px;top:842.20px;font-size:13px;line-height:17px;font-weight:400;color:#b8b8b8;">Amount Paid</div>
<div class="t" style="left:1008.50px;top:876.10px;font-size:13px;line-height:17px;font-weight:700;color:#333;transform:scaleX(0.9607);transform-origin:0 0;">Change</div>
<div class="a" style="left:1137px;top:874px;width:151px;height:34px;background:#fff;border:1px solid #d2d6de;"></div>
<div class="t" style="left:1150.50px;top:883.20px;font-size:13px;line-height:17px;font-weight:400;color:#b8b8b8;transform:scaleX(0.9728);transform-origin:0 0;">Change</div>
<div class="t" style="left:1378.00px;top:660.10px;font-size:13px;line-height:17px;font-weight:700;color:#333;transform:scaleX(0.9448);transform-origin:0 0;">Advance</div>
<div class="t" style="left:1378.00px;top:680.10px;font-size:13px;line-height:17px;font-weight:700;color:#333;transform:scaleX(0.9348);transform-origin:0 0;">Against SO</div>
<div class="a" style="left:1507px;top:658px;width:150px;height:34px;background:#fff;border:1px solid #d2d6de;"></div>
<div class="t" style="left:1520.50px;top:667.20px;font-size:13px;line-height:17px;font-weight:400;color:#b8b8b8;transform:scaleX(0.9385);transform-origin:0 0;">Advance SO</div>
<div class="t" style="left:1378.00px;top:712.10px;font-size:13px;line-height:17px;font-weight:700;color:#333;transform:scaleX(0.9685);transform-origin:0 0;">Total (Inc GST)</div>
<div class="a" style="left:1507px;top:710px;width:150px;height:34px;background:#fff;border:1px solid #d2d6de;"></div>
<div class="t" style="left:1520.50px;top:719.20px;font-size:13px;line-height:17px;font-weight:400;color:#555;transform:scaleX(0.9578);transform-origin:0 0;">2351</div>
<div class="t" style="left:1378.00px;top:753.10px;font-size:13px;line-height:17px;font-weight:700;color:#333;transform:scaleX(0.9786);transform-origin:0 0;">Total Discount</div>
<div class="a" style="left:1507px;top:751px;width:150px;height:34px;background:#fff;border:1px solid #d2d6de;"></div>
<div class="t" style="left:1520.50px;top:760.20px;font-size:13px;line-height:17px;font-weight:400;color:#555;transform:scaleX(0.8990);transform-origin:0 0;">0</div>
<div class="t" style="left:1378.00px;top:794.10px;font-size:13px;line-height:17px;font-weight:700;color:#333;transform:scaleX(0.9849);transform-origin:0 0;">Grand Total</div>
<div class="a" style="left:1507px;top:792px;width:150px;height:34px;background:#fff;border:1px solid #d2d6de;"></div>
<div class="t" style="left:1520.50px;top:801.20px;font-size:13px;line-height:17px;font-weight:400;color:#555;transform:scaleX(0.9578);transform-origin:0 0;">2351</div>
<div class="t" style="left:1378.00px;top:835.10px;font-size:13px;line-height:17px;font-weight:700;color:#333;">Amount</div>
<div class="t" style="left:1378.00px;top:855.10px;font-size:13px;line-height:17px;font-weight:700;color:#333;">Remaining</div>
<div class="a" style="left:1507px;top:833px;width:150px;height:34px;background:#fff;border:1px solid #d2d6de;"></div>
<div class="t" style="left:1520.50px;top:842.20px;font-size:13px;line-height:17px;font-weight:400;color:#555;transform:scaleX(0.9578);transform-origin:0 0;">2351</div>


</body></html>
